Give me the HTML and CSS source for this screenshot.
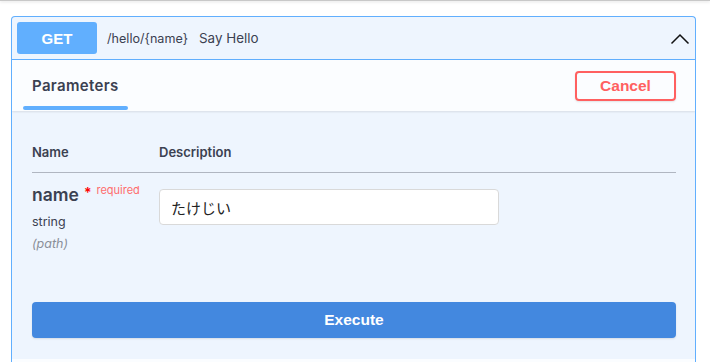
FILE: index.html
```html
<!DOCTYPE html>
<html lang="ja">
<head>
<meta charset="utf-8">
<title>Swagger</title>
<link rel="stylesheet" href="styles.css">
</head>
<body>
<div class="topbar"></div>
<div class="opblock">
  <div class="summary">
    <span class="method">GET</span>
    <span class="path">/hello/{name}</span>
    <span class="desc">Say Hello</span>
    <svg class="chevron" width="20" height="12" viewBox="0 0 20 12"><path d="M1.5 10.5 L10 2 L18.5 10.5" fill="none" stroke="#111" stroke-width="1.5"/></svg>
  </div>
  <div class="section-header">
    <div class="tab"><h4>Parameters</h4></div>
    <button class="btn-cancel">Cancel</button>
  </div>
  <div class="params">
    <div class="thead">
      <div class="col-name">Name</div>
      <div class="col-desc">Description</div>
    </div>
    <div class="row">
      <div class="col-name">
        <div class="pname">name<span class="star">*</span><span class="req">required</span></div>
        <div class="ptype">string</div>
        <div class="pin">(path)</div>
      </div>
      <div class="col-desc">
        <input class="inp" type="text" value="たけじい">
      </div>
    </div>
    <button class="btn-exec">Execute</button>
  </div>
  <div class="next"></div>
</div>
</body>
</html>
```
FILE: styles.css
```css
* { box-sizing: border-box; }
body {
  margin: 0;
  background: #fff;
  font-family: Inter, "Noto Sans CJK JP", sans-serif;
  color: #3b4151;
}
.topbar {
  height: 1px;
  background: #c8c8c8;
  box-shadow: 0 1px 3px rgba(0,0,0,.18);
}
.opblock {
  margin: 15px 14px 0 11px;
  border: 1px solid #61affe;
  border-bottom: none;
  border-radius: 4px 4px 0 0;
  background: #eef5fe;
  height: 347px;
  overflow: hidden;
}
.summary {
  display: flex;
  align-items: center;
  padding: 5px;
  height: 43px;
  border-bottom: 1px solid #61affe;
}
.method {
  width: 80px;
  height: 32px;
  border-radius: 3px;
  background: #61affe;
  color: #fff;
  font-family: "Liberation Sans", Arial, sans-serif;
  font-weight: 700;
  font-size: 15px;
  display: flex;
  align-items: center;
  justify-content: center;
}
.path {
  margin-left: 10px;
  font-size: 12.6px;
  color: #3b4151;
}
.desc {
  margin-left: 11px;
  font-size: 13.4px;
  color: #3b4151;
}
.chevron { margin-left: auto; margin-right: 0; margin-top: 1px; }
.section-header {
  display: flex;
  align-items: center;
  justify-content: space-between;
  height: 51px;
  padding: 0 19px 0 20px;
  background: #fbfdff;
  box-shadow: 0 1px 2px rgba(0,0,0,.1);
  position: relative;
}
.tab { align-self: stretch; display: flex; align-items: center; }
.tab h4 {
  margin: 0;
  font-size: 15px;
  font-weight: 600;
  letter-spacing: 0.35px;
  position: relative;
  padding-top: 0;
}
.tab h4::after {
  content: "";
  position: absolute;
  left: -9px;
  right: -9px;
  top: 30px;
  height: 4px;
  border-radius: 2px;
  background: #61affe;
}
.btn-cancel {
  width: 101px;
  height: 30px;
  border: 2px solid #ff6060;
  border-radius: 4px;
  background: transparent;
  color: #ff6060;
  font-family: "Liberation Sans", Arial, sans-serif;
  font-weight: 700;
  font-size: 15.5px;
  box-shadow: 0 1px 2px rgba(0,0,0,.1);
  padding: 0;
}
.params { padding: 20px 19px 0 20px; }
.thead {
  display: flex;
  height: 42px;
  padding-top: 13px;
  border-bottom: 1px solid rgba(59,65,81,.35);
  font-size: 13px;
  font-weight: 600;
}
.col-name { width: 127px; flex: none; }
.col-desc { flex: 1; }
.row { display: flex; padding-top: 15px; height: 129px; }
.pname {
  font-size: 17.5px;
  font-weight: 600;
  line-height: 20px;
  margin-top: -3px;
  display: flex;
  align-items: flex-start;
}
.star {
  color: #ff0000;
  font-size: 14px;
  margin-left: 5px;
  margin-top: -2px;
}
.req {
  color: #ff6d6d;
  font-size: 11px;
  font-weight: 400;
  margin-left: 5px;
  margin-top: -2px;
  line-height: 14px;
}
.ptype {
  font-size: 12.5px;
  margin-top: 9px;
  line-height: 16px;
}
.pin {
  font-size: 12.5px;
  font-style: italic;
  color: #8a8f99;
  margin-top: 6px;
  line-height: 16px;
}
.inp {
  display: block;
  width: 340px;
  height: 36px;
  margin-top: 1px;
  border: 1px solid #d9d9d9;
  border-radius: 4px;
  background: #fff;
  padding: 0 11px;
  font-family: "Noto Sans CJK JP", Inter, sans-serif;
  font-size: 15px;
  color: #222;
}
.btn-exec {
  display: block;
  width: 100%;
  height: 36px;
  border: none;
  border-radius: 4px;
  background: #4388df;
  color: #fff;
  font-family: "Liberation Sans", Arial, sans-serif;
  font-weight: 700;
  font-size: 15.5px;
  box-shadow: 0 1px 2px rgba(0,0,0,.1);
}
.next {
  margin-top: 21px;
  height: 10px;
  background: #fbfdff;
}
```
